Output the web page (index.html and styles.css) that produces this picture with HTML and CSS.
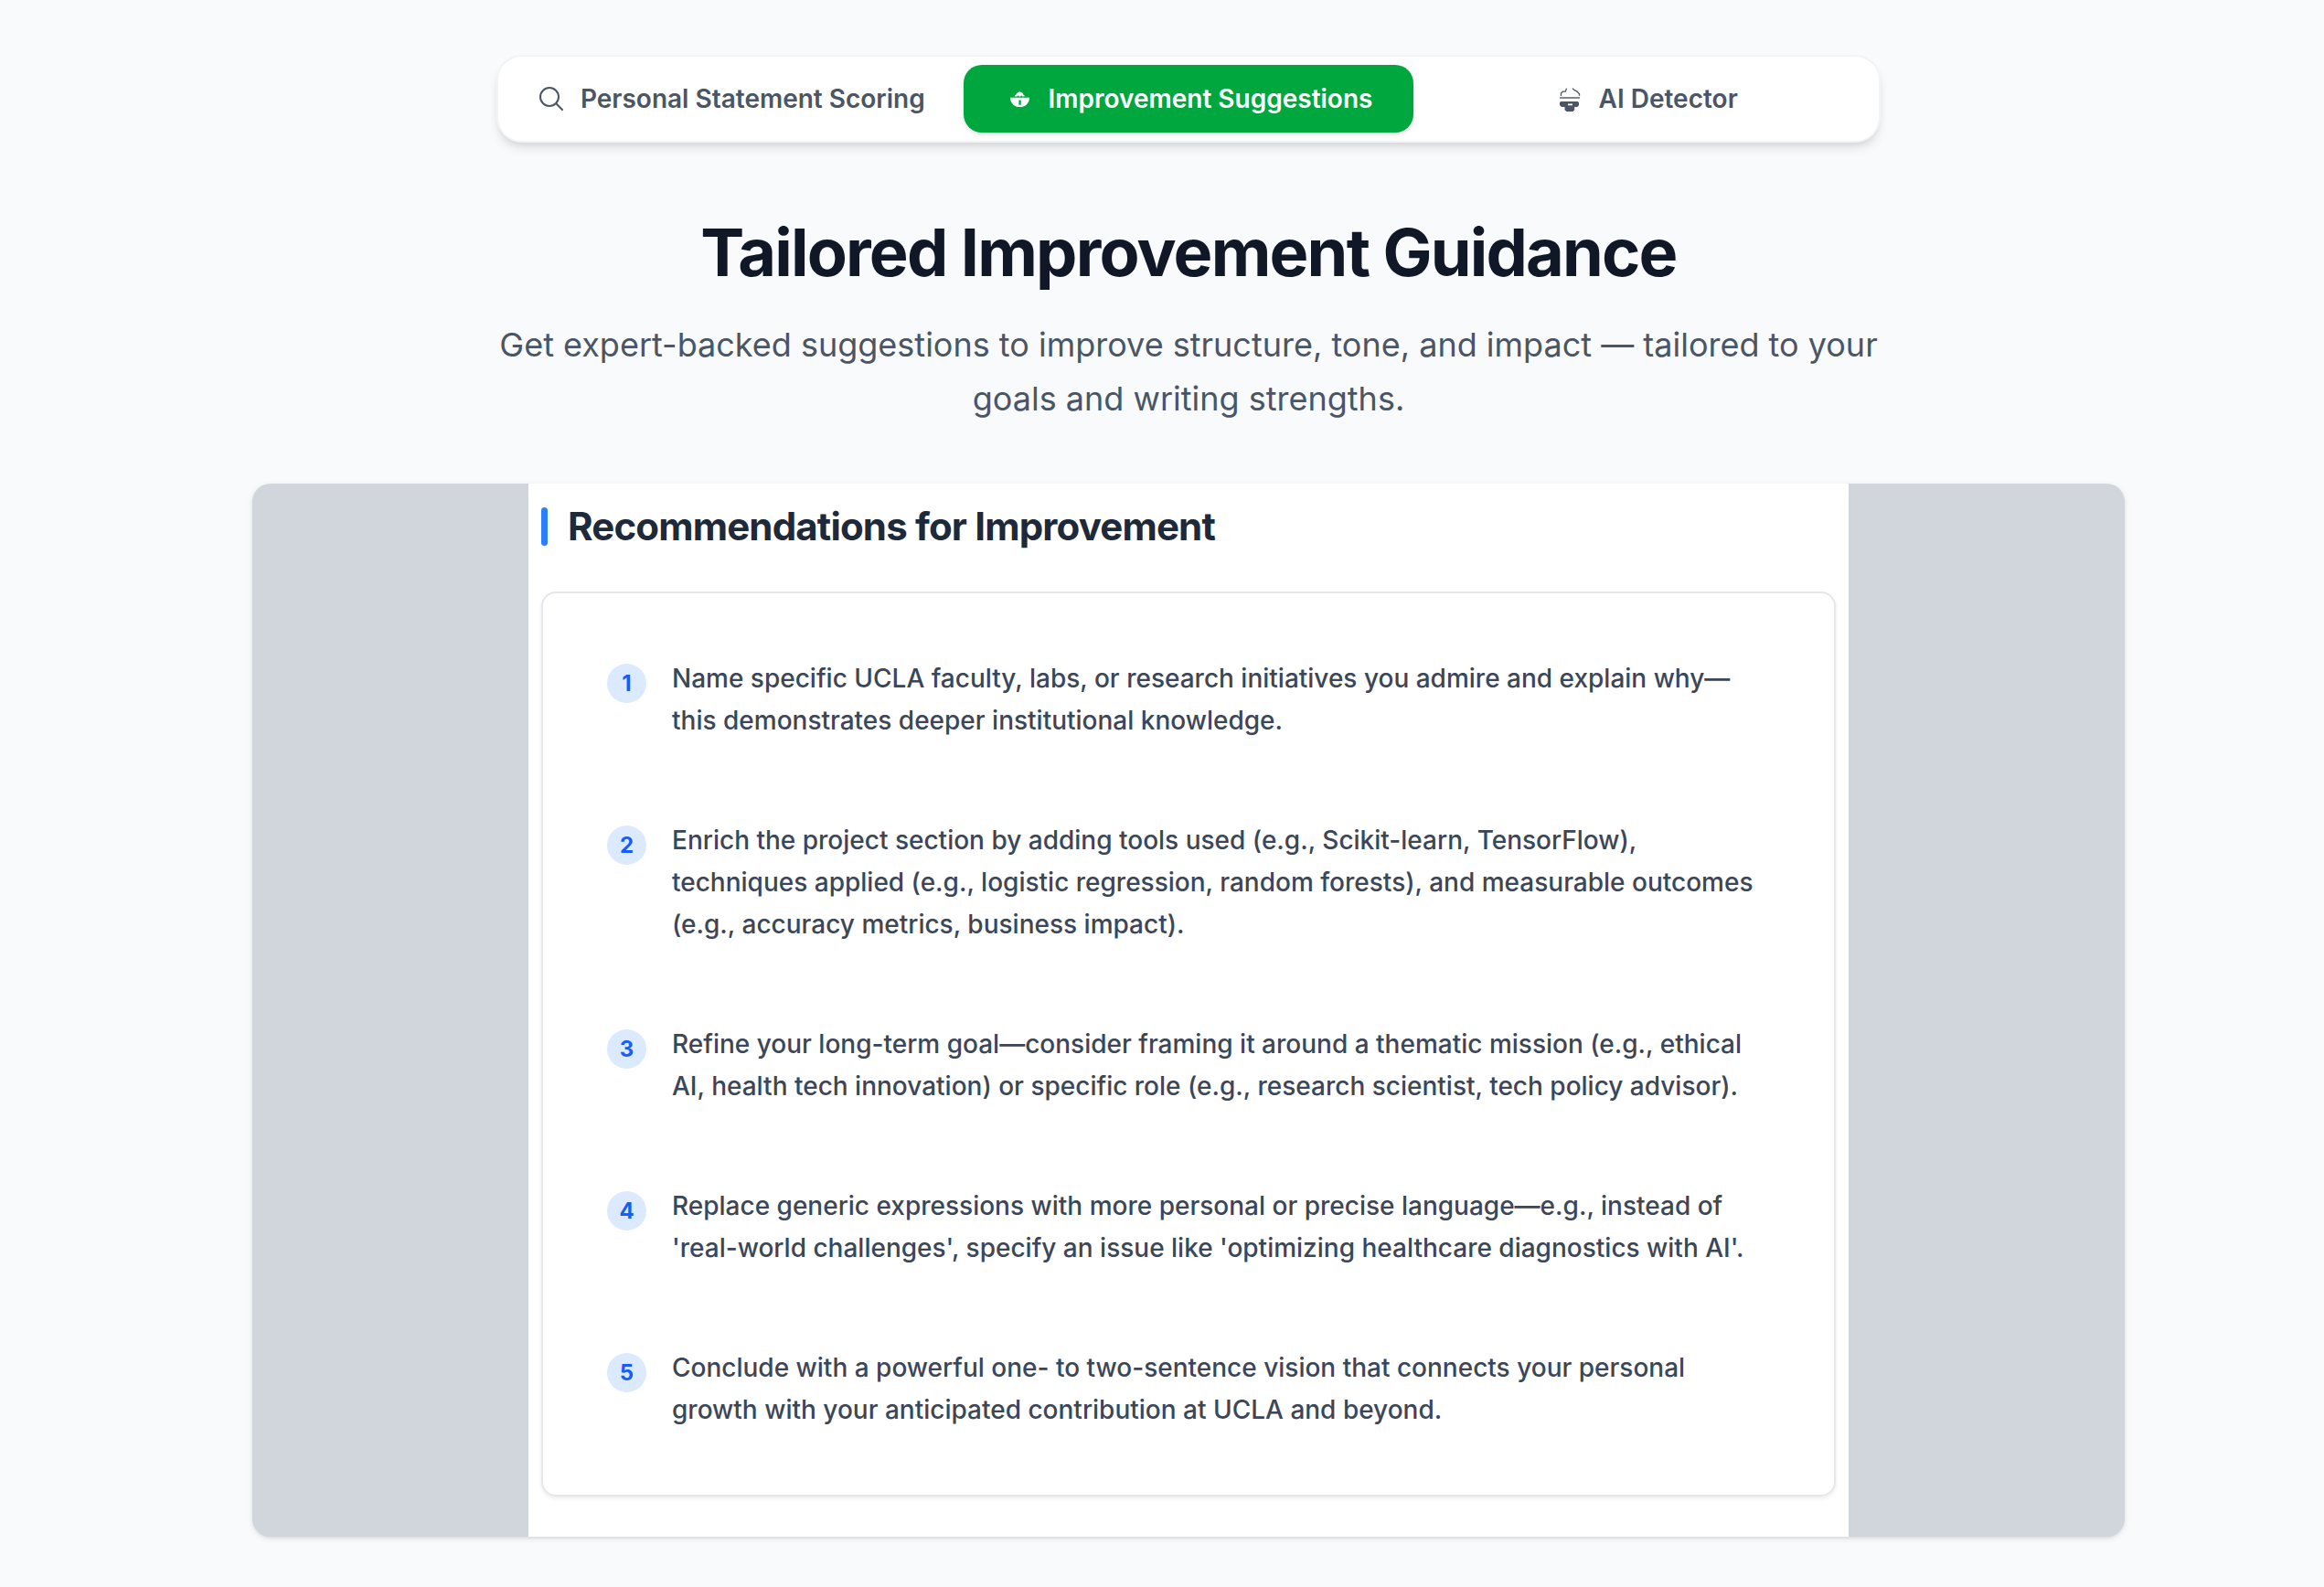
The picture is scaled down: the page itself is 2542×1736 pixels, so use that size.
FILE: index.html
```html
<!DOCTYPE html>
<html lang="en">
<head>
  <meta charset="UTF-8">
  <meta name="viewport" content="width=device-width, initial-scale=1">
  <title>Tailored Improvement Guidance</title>
  <link rel="stylesheet" href="styles.css">
</head>
<body>

  <main class="page">
    <nav class="tabs">
      <button class="tab" type="button">
        <svg class="icon" viewBox="0 0 24 24" fill="none" stroke="currentColor" stroke-width="1.5" stroke-linecap="round" stroke-linejoin="round" aria-hidden="true">
          <path d="m21 21-5.197-5.197m0 0A7.5 7.5 0 1 0 5.196 5.196a7.5 7.5 0 0 0 10.607 10.607Z"/>
        </svg>
        Personal Statement Scoring
      </button>
      <button class="tab active" type="button">
        <svg class="icon" viewBox="0 0 32 32" fill="currentColor" aria-hidden="true">
          <path fill-rule="evenodd" d="M6 14.7h21v1.2C26.300 21.500 22 25 16.500 25S6.700 21.500 6 15.900ZM15.400 17.500v5.300h2.300v-5.300Z"/>
          <path d="M11 13.600V12h1.200c.5-2.200 2.200-3.500 4.200-3.500s3.700 1.300 4.200 3.500h.9v1.600h-2.200l-1.300-1.400-.7 1.400h-1.600l-.7-1.400-1.400 1.400Z"/>
        </svg>
        Improvement Suggestions
      </button>
      <button class="tab" type="button">
        <svg class="icon" viewBox="0 0 32 32" fill="currentColor" aria-hidden="true">
          <path d="M6.500 13v-3.200l2-1.600h2.800l1.200-3.600M19 4.600l1.600 1.700 3.400 1.800 2.500 2.700v2" fill="none" stroke="currentColor" stroke-width="1.300"/>
          <path d="M5 14.300h22v1.400H5Z"/>
          <path fill-rule="evenodd" d="M6.200 19h18.600l1.200 1.200V23l-1.600 2h-3.200v3.200L19.500 30h-7L10.500 28.200V25H7L5 23v-2.800ZM14 21.500v1.800h5v-1.800Z"/>
        </svg>
        AI Detector
      </button>
    </nav>

    <header class="intro">
      <h1>Tailored Improvement Guidance</h1>
      <p>Get expert-backed suggestions to improve structure, tone, and impact — tailored to your goals and writing strengths.</p>
    </header>

    <section class="preview">
      <div class="sheet">
        <h2>Recommendations for Improvement</h2>
        <ol class="card">
          <li><span class="number">1</span><p>Name specific UCLA faculty, labs, or research initiatives you admire and explain why—this demonstrates deeper institutional knowledge.</p></li>
          <li><span class="number">2</span><p>Enrich the project section by adding tools used (e.g., Scikit-learn, TensorFlow), techniques applied (e.g., logistic regression, random forests), and measurable outcomes (e.g., accuracy metrics, business impact).</p></li>
          <li><span class="number">3</span><p>Refine your long-term goal—consider framing it around a thematic mission (e.g., ethical AI, health tech innovation) or specific role (e.g., research scientist, tech policy advisor).</p></li>
          <li><span class="number">4</span><p>Replace generic expressions with more personal or precise language—e.g., instead of 'real-world challenges', specify an issue like 'optimizing healthcare diagnostics with AI'.</p></li>
          <li><span class="number">5</span><p>Conclude with a powerful one- to two-sentence vision that connects your personal growth with your anticipated contribution at UCLA and beyond.</p></li>
        </ol>
      </div>
    </section>
  </main>

</body>
</html>
```
FILE: styles.css
```css
* {
  box-sizing: border-box;
}

body {
  margin: 0;
  font-family: Inter, sans-serif;
  background: #f9fafc;
  color: #4a5565;
}

h1, h2, p {
  margin: 0;
}

.page {
  display: flex;
  flex-direction: column;
  align-items: center;
  padding: 60px 0 54px 58px;
}

.tabs {
  display: grid;
  grid-template-columns: repeat(3, 1fr);
  gap: 8px;
  width: 100%;
  max-width: 1514px;
  padding: 9px 8px;
  background: #fff;
  border: 2px solid #f3f4f6;
  border-radius: 28px;
  box-shadow: 0 8px 12px -2px rgba(0, 0, 0, 0.1), 0 4px 8px -4px rgba(0, 0, 0, 0.1);
}

.tab {
  display: flex;
  align-items: center;
  justify-content: center;
  gap: 16px;
  height: 74px;
  padding: 0;
  border: none;
  border-radius: 20px;
  background: none;
  color: #4a5565;
  font-family: inherit;
  font-size: 28px;
  font-weight: 600;
  white-space: nowrap;
  cursor: pointer;
}

.tab.active {
  background: #00a63e;
  color: #fff;
  box-shadow: 0 2px 6px rgba(0, 0, 0, 0.1), 0 2px 4px -2px rgba(0, 0, 0, 0.1);
}

.icon {
  width: 32px;
  height: 32px;
}

.intro {
  max-width: 1536px;
  margin-top: 84px;
  text-align: center;
}

h1 {
  color: #101828;
  font-size: 72px;
  font-weight: 700;
  line-height: 72px;
  letter-spacing: -0.025em;
}

.intro p {
  margin-top: 36px;
  font-size: 36px;
  line-height: 59px;
}

.preview {
  display: flex;
  justify-content: center;
  width: 100%;
  max-width: 2048px;
  margin-top: 63px;
  overflow: hidden;
  background: #d1d5dc;
  border-radius: 20px;
  box-shadow: 0 2px 6px rgba(0, 0, 0, 0.1), 0 2px 4px -2px rgba(0, 0, 0, 0.1);
}

.sheet {
  width: 100%;
  max-width: 1444px;
  padding: 26px 14px 44px;
  background: #fff;
}

h2 {
  display: flex;
  align-items: center;
  gap: 22px;
  color: #1e2939;
  font-size: 42px;
  font-weight: 700;
  line-height: 42px;
  letter-spacing: -0.02em;
}

h2::before {
  content: "";
  width: 7px;
  height: 42px;
  border-radius: 4px;
  background: #2b7fff;
}

.card {
  display: flex;
  flex-direction: column;
  gap: 85px;
  margin: 50px 0 0;
  padding: 70px;
  list-style: none;
  border: 2px solid #e5e7eb;
  border-radius: 16px;
  box-shadow: 0 2px 4px rgba(0, 0, 0, 0.08);
}

.card li {
  display: flex;
  align-items: flex-start;
  gap: 28px;
  color: #3b4658;
  font-size: 28px;
  font-weight: 500;
  line-height: 46px;
}

.number {
  flex: none;
  width: 43px;
  margin-top: 7px;
  border-radius: 50%;
  background: #dbeafe;
  color: #155dfc;
  font-size: 24px;
  font-weight: 700;
  line-height: 43px;
  text-align: center;
}
```
